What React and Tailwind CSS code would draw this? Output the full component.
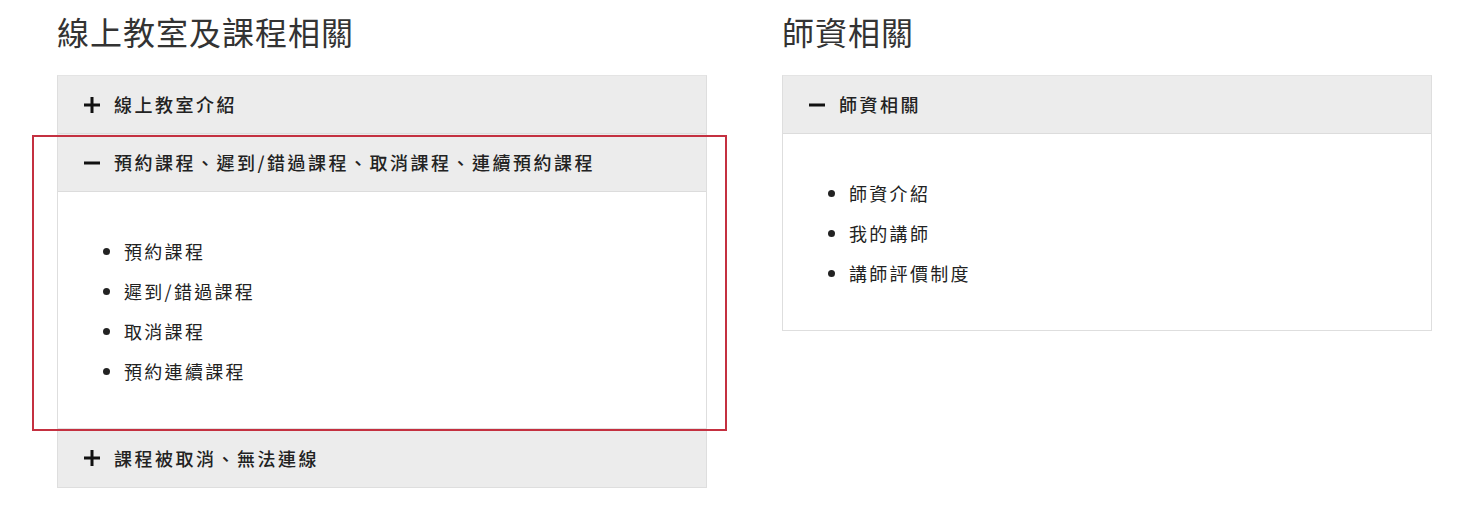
import React from "react";

const font = { fontFamily: '"Noto Sans CJK TC", "Noto Sans", sans-serif' };

function Plus() {
  return (
    <svg width="16" height="16" viewBox="0 0 16 16" className="shrink-0">
      <path d="M0 8h16M8 0v16" stroke="#111" strokeWidth="3" />
    </svg>
  );
}

function Minus() {
  return (
    <svg width="16" height="16" viewBox="0 0 16 16" className="shrink-0">
      <path d="M0 8h16" stroke="#111" strokeWidth="3" />
    </svg>
  );
}

function Item({ title, open, items }) {
  return (
    <div>
      <div className="h-[58px] flex items-center gap-[14px] pl-[26px] bg-[#ececec] border-b border-[#dcdcdc]">
        {open ? <Minus /> : <Plus />}
        <span className="text-[18px] font-medium text-[#222] tracking-[2.5px]">{title}</span>
      </div>
      {open && (
        <div className="bg-white border-b border-[#e2e2e2] pt-[39px] pb-[37px]">
          <ul className="list-disc pl-[66px] text-[18px] text-[#222] tracking-[2.3px]">
            {items.map((t) => (
              <li key={t} className="leading-[40px]">{t}</li>
            ))}
          </ul>
        </div>
      )}
    </div>
  );
}

export default function App() {
  return (
    <div className="min-h-screen bg-white pl-[57px] pt-[12px]" style={font}>
      <div className="flex gap-[75px]">
        <section className="w-[650px]">
          <h2 className="text-[32px] leading-[38px] text-[#333] font-normal mb-[25px] tracking-[1px]">線上教室及課程相關</h2>
          <div className="relative border border-[#dedede] border-t-[#e4e4e4]">
            <Item title="線上教室介紹" />
            <Item
              title="預約課程、遲到/錯過課程、取消課程、連續預約課程"
              open
              items={["預約課程", "遲到/錯過課程", "取消課程", "預約連續課程"]}
            />
            <div className="[&>div>div]:border-b-0">
              <Item title="課程被取消、無法連線" />
            </div>
            <div className="absolute left-[-26px] top-[59px] w-[695px] h-[296px] border-2 border-[#c43040] pointer-events-none" />
          </div>
        </section>
        <section className="w-[650px]">
          <h2 className="text-[32px] leading-[38px] text-[#333] font-normal mb-[25px] tracking-[1px]">師資相關</h2>
          <div className="border border-[#dedede] border-t-[#e4e4e4]">
            <div className="[&>div>div:last-child]:border-b-0">
              <Item title="師資相關" open items={["師資介紹", "我的講師", "講師評價制度"]} />
            </div>
          </div>
        </section>
      </div>
    </div>
  );
}
